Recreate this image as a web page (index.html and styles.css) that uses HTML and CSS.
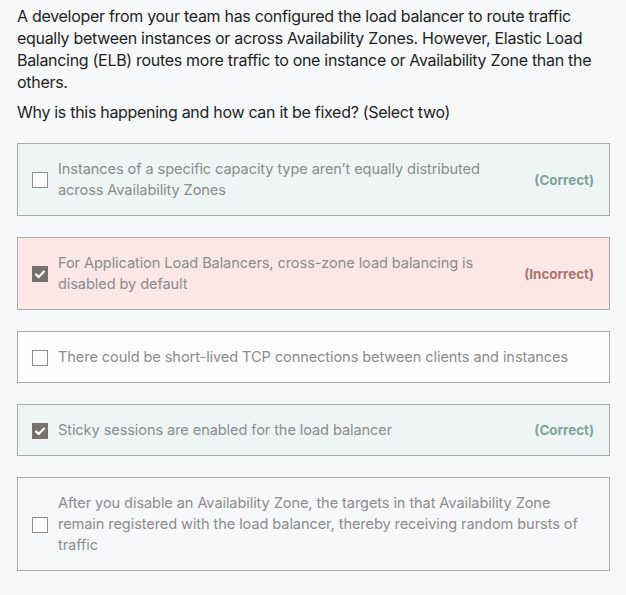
FILE: index.html
```html
<!DOCTYPE html>
<html>
<head>
<meta charset="utf-8">
<link rel="stylesheet" href="styles.css">
</head>
<body>
<div class="quiz">
  <p class="question">A developer from your team has configured the load balancer to route traffic equally between instances or across Availability Zones. However, Elastic Load Balancing (ELB) routes more traffic to one instance or Availability Zone than the others.</p>
  <p class="prompt">Why is this happening and how can it be fixed? (Select two)</p>
  <div class="options">
    <div class="option correct">
      <span class="box"></span>
      <span class="text">Instances of a specific capacity type aren’t equally distributed across Availability Zones</span>
      <span class="tag tag-correct">(Correct)</span>
    </div>
    <div class="option incorrect">
      <span class="box checked"><svg viewBox="0 0 16 16" width="16" height="16"><path d="M4 8.4 L6.7 11 L12 5.6" fill="none" stroke="#fff" stroke-width="2.2" stroke-linecap="round" stroke-linejoin="round"/></svg></span>
      <span class="text">For Application Load Balancers, cross-zone load balancing is disabled by default</span>
      <span class="tag tag-incorrect">(Incorrect)</span>
    </div>
    <div class="option neutral">
      <span class="box"></span>
      <span class="text">There could be short-lived TCP connections between clients and instances</span>
    </div>
    <div class="option correct">
      <span class="box checked"><svg viewBox="0 0 16 16" width="16" height="16"><path d="M4 8.4 L6.7 11 L12 5.6" fill="none" stroke="#fff" stroke-width="2.2" stroke-linecap="round" stroke-linejoin="round"/></svg></span>
      <span class="text">Sticky sessions are enabled for the load balancer</span>
      <span class="tag tag-correct">(Correct)</span>
    </div>
    <div class="option plain">
      <span class="box"></span>
      <span class="text">After you disable an Availability Zone, the targets in that Availability Zone remain registered with the load balancer, thereby receiving random bursts of traffic</span>
    </div>
  </div>
</div>
</body>
</html>
```
FILE: styles.css
```css
html, body {
  margin: 0;
  padding: 0;
  background: #f7f8fa;
}
body {
  font-family: Inter, "Liberation Sans", sans-serif;
  color: #1d1f23;
}
.quiz {
  padding: 5px 16px 0 17px;
}
.question {
  margin: 0;
  font-size: 16px;
  line-height: 22px;
  letter-spacing: -0.3px;
}
.prompt {
  margin: 8px 0 0 0;
  font-size: 16px;
  line-height: 22px;
  letter-spacing: -0.3px;
}
.options {
  margin-top: 20px;
  display: flex;
  flex-direction: column;
  gap: 21px;
}
.option {
  display: flex;
  align-items: center;
  border: 1px solid #a7a9ab;
  padding: 15px 15px 14px 14px;
  font-size: 14.6px;
  line-height: 21px;
  letter-spacing: -0.1px;
  color: #8b8c8e;
}
.option.correct { background: #eff5f5; }
.option.incorrect { background: #fbe8e6; }
.option.neutral { background: #fdfdfd; }
.option.plain { background: #f7f8fa; }
.box {
  flex: 0 0 auto;
  width: 14px;
  height: 14px;
  border: 1px solid #8e8e8e;
  background: #fff;
  margin-right: 10px;
  display: flex;
  align-items: center;
  justify-content: center;
}
.box.checked {
  width: 16px;
  height: 16px;
  border: none;
  background: #77706f;
}
.text {
  flex: 1 1 auto;
  padding-right: 20px;
}
.option.neutral .text,
.option.plain .text {
  padding-right: 10px;
}
.tag {
  flex: 0 0 auto;
  font-weight: 700;
  font-size: 13.4px;
  letter-spacing: 0;
}
.tag-correct { color: #7aa596; }
.tag-incorrect { color: #ac7470; }
```
